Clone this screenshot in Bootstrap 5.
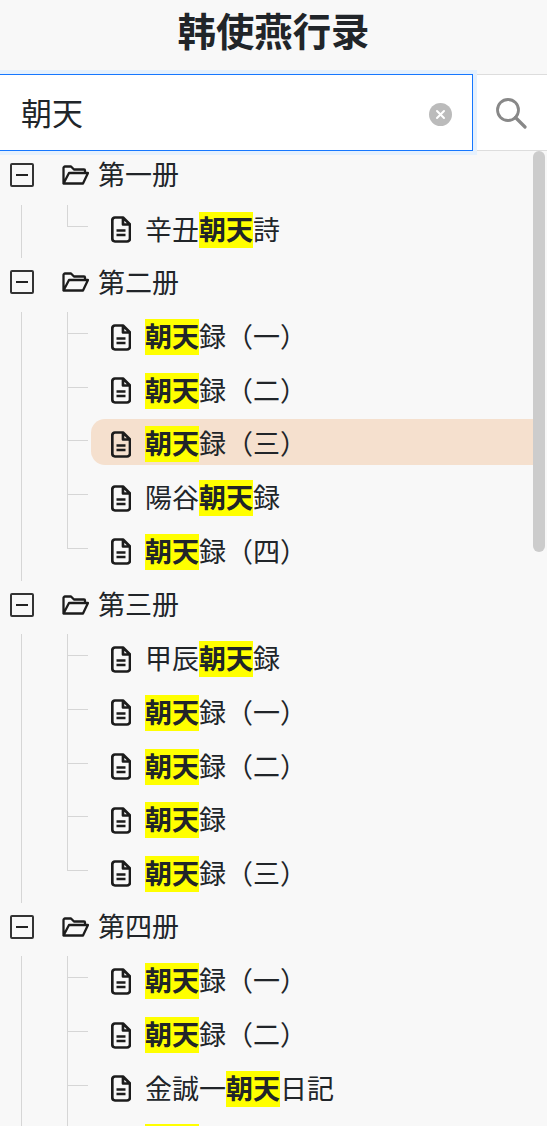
<!DOCTYPE html>
<html lang="ja">
<head>
    <title>韩使燕行录</title>
    <meta charset="utf-8">
    <link href="https://cdn.jsdelivr.net/npm/bootstrap@5.3.0/dist/css/bootstrap.min.css" rel="stylesheet">
    <style>
        html, body { height: 100%; overflow: hidden; }
        body { background: #f8f8f8; color: #212529; font-family: "Noto Sans", "Noto Sans CJK JP", sans-serif; }
        .app-title { height: 74px; margin: 0; font-size: 38.4px; font-weight: 700; line-height: 59px; text-align: center; font-family: "Noto Sans CJK SC", sans-serif; }
        .search-bar { height: 77px; background: #fff; border-top: 1px solid #ddd; border-bottom: 1px solid #ddd; }
        .search-box { width: 473px; height: 77px; margin-top: -1px; }
        .search-box input { height: 77px; padding: 0 50px 3px 22px; margin-left: -2px; width: 475px; border: 1px solid #1677ff; border-radius: 0; box-shadow: 0 0 0 4px #e6f1fd; font-size: 31px; color: #212529; outline: 0; font-family: "Noto Sans CJK JP", sans-serif; }
        .clear-btn { right: 21px; top: 27px; width: 23px; height: 23px; }
        .search-btn { width: 74px; height: 75px; padding: 0 0 0 1px; border: 0; border-radius: 0; }
        .tree-wrap { height: 975px; overflow: hidden; }
        .scroll-thumb { top: 0; right: 2px; width: 12px; height: 401px; border-radius: 6px; background: #ccc; }
        .tree-list { margin: 0; padding: 0 14px 0 0; list-style: none; }
        .tree-head { height: 53.7px; padding: 1px 0 6.7px; font-size: 27px; }
        .tree-head .toggle-ico { margin: 0 28px 0 10px; }
        .tree-head .folder-ico { margin-right: 9px; }
        .head-text { margin-top: 1px; }
        .tree-kids { margin: 0 0 0 21px; padding: 0 0 0 45px; list-style: none; border-left: 1px solid #d6d6d6; }
        .tree-leaf { height: 53.7px; border-left: 1px solid #d6d6d6; }
        .tree-leaf:last-child { border-left-color: transparent; }
        .leaf-elbow { width: 20px; height: 22px; flex: none; border-bottom: 1px solid #d6d6d6; }
        .tree-leaf:last-child .leaf-elbow { margin-left: -1px; width: 21px; border-left: 1px solid #d6d6d6; }
        .tree-node { height: 46px; flex: 1; margin-left: 3px; padding: 4px 0 0 20px; font-size: 27px; gap: 14px; border-radius: 14px 0 0 14px; white-space: nowrap; }
        .tree-node.is-current { background: #f5e0ce; }
        .hit { display: inline-block; height: 36px; line-height: 36px; background: #ff0; font-weight: 700; color: #212529; }
        .node-text { line-height: 36px; }
    </style>
</head>
<body>
    <h1 class="app-title">韩使燕行录</h1>

    <div class="search-bar d-flex">
        <div class="search-box position-relative">
            <input type="text" value="朝天">
            <span class="clear-btn position-absolute">
                <svg width="23" height="23" viewBox="0 0 23 23"><circle cx="11.5" cy="11.5" r="11.5" fill="#bbb"/><path d="M8 8l7 7M15 8l-7 7" stroke="#fff" stroke-width="2" stroke-linecap="round"/></svg>
            </span>
        </div>
        <button class="btn search-btn d-flex align-items-center justify-content-center" type="button">
            <svg width="32" height="32" viewBox="0 0 32 32" fill="none" stroke="#888"><circle cx="13" cy="13" r="10.5" stroke-width="2.8"/><path d="M20.5 20.5L30 30" stroke-width="3.2" stroke-linecap="round"/></svg>
        </button>
    </div>

    <svg class="d-none">
        <symbol id="ico-toggle" viewBox="0 0 24 24"><rect x="1" y="1" width="22" height="22" rx="1" fill="none" stroke="#333" stroke-width="2"/><path d="M6 12h12" stroke="#222" stroke-width="2"/></symbol>
        <symbol id="ico-folder" viewBox="0 0 27 20"><path d="M1.500 18.500V3A1.500 1.500 0 0 1 3 1.500H9l3 3H22A1 1 0 0 1 23 5.500V8M1.500 18.500H21L26 8H7z" fill="none" stroke="#1c1c1c" stroke-width="2.300" stroke-linejoin="round"/></symbol>
        <symbol id="ico-file" viewBox="0 0 20 27"><path d="M4 1.500H12L19 8.500V22.500A3 3 0 0 1 16 25.500H4A3 3 0 0 1 1.300 22.500V4.500A3 3 0 0 1 4 1.500ZM12 1.500V8.500H19M5.500 14.500H14.500M5.500 19H14.500" fill="none" stroke="#1c1c1c" stroke-width="2.700" stroke-linejoin="round"/></symbol>
    </svg>

    <div class="tree-wrap position-relative">
        <div class="scroll-thumb position-absolute"></div>
        <ul class="tree-list">
            <li>
                <div class="tree-head d-flex align-items-center"><svg class="toggle-ico" width="24" height="24"><use href="#ico-toggle"/></svg><svg class="folder-ico" width="27" height="20"><use href="#ico-folder"/></svg><span class="head-text">第一册</span></div>
                <ul class="tree-kids">
                    <li class="tree-leaf d-flex"><span class="leaf-elbow"></span><div class="tree-node d-flex align-items-center"><svg width="20" height="27"><use href="#ico-file"/></svg><span class="node-text">辛丑<span class="hit">朝天</span>詩</span></div></li>
                </ul>
            </li>
            <li>
                <div class="tree-head d-flex align-items-center"><svg class="toggle-ico" width="24" height="24"><use href="#ico-toggle"/></svg><svg class="folder-ico" width="27" height="20"><use href="#ico-folder"/></svg><span class="head-text">第二册</span></div>
                <ul class="tree-kids">
                    <li class="tree-leaf d-flex"><span class="leaf-elbow"></span><div class="tree-node d-flex align-items-center"><svg width="20" height="27"><use href="#ico-file"/></svg><span class="node-text"><span class="hit">朝天</span>録（一）</span></div></li>
                    <li class="tree-leaf d-flex"><span class="leaf-elbow"></span><div class="tree-node d-flex align-items-center"><svg width="20" height="27"><use href="#ico-file"/></svg><span class="node-text"><span class="hit">朝天</span>録（二）</span></div></li>
                    <li class="tree-leaf d-flex"><span class="leaf-elbow"></span><div class="tree-node is-current d-flex align-items-center"><svg width="20" height="27"><use href="#ico-file"/></svg><span class="node-text"><span class="hit">朝天</span>録（三）</span></div></li>
                    <li class="tree-leaf d-flex"><span class="leaf-elbow"></span><div class="tree-node d-flex align-items-center"><svg width="20" height="27"><use href="#ico-file"/></svg><span class="node-text">陽谷<span class="hit">朝天</span>録</span></div></li>
                    <li class="tree-leaf d-flex"><span class="leaf-elbow"></span><div class="tree-node d-flex align-items-center"><svg width="20" height="27"><use href="#ico-file"/></svg><span class="node-text"><span class="hit">朝天</span>録（四）</span></div></li>
                </ul>
            </li>
            <li>
                <div class="tree-head d-flex align-items-center"><svg class="toggle-ico" width="24" height="24"><use href="#ico-toggle"/></svg><svg class="folder-ico" width="27" height="20"><use href="#ico-folder"/></svg><span class="head-text">第三册</span></div>
                <ul class="tree-kids">
                    <li class="tree-leaf d-flex"><span class="leaf-elbow"></span><div class="tree-node d-flex align-items-center"><svg width="20" height="27"><use href="#ico-file"/></svg><span class="node-text">甲辰<span class="hit">朝天</span>録</span></div></li>
                    <li class="tree-leaf d-flex"><span class="leaf-elbow"></span><div class="tree-node d-flex align-items-center"><svg width="20" height="27"><use href="#ico-file"/></svg><span class="node-text"><span class="hit">朝天</span>録（一）</span></div></li>
                    <li class="tree-leaf d-flex"><span class="leaf-elbow"></span><div class="tree-node d-flex align-items-center"><svg width="20" height="27"><use href="#ico-file"/></svg><span class="node-text"><span class="hit">朝天</span>録（二）</span></div></li>
                    <li class="tree-leaf d-flex"><span class="leaf-elbow"></span><div class="tree-node d-flex align-items-center"><svg width="20" height="27"><use href="#ico-file"/></svg><span class="node-text"><span class="hit">朝天</span>録</span></div></li>
                    <li class="tree-leaf d-flex"><span class="leaf-elbow"></span><div class="tree-node d-flex align-items-center"><svg width="20" height="27"><use href="#ico-file"/></svg><span class="node-text"><span class="hit">朝天</span>録（三）</span></div></li>
                </ul>
            </li>
            <li>
                <div class="tree-head d-flex align-items-center"><svg class="toggle-ico" width="24" height="24"><use href="#ico-toggle"/></svg><svg class="folder-ico" width="27" height="20"><use href="#ico-folder"/></svg><span class="head-text">第四册</span></div>
                <ul class="tree-kids">
                    <li class="tree-leaf d-flex"><span class="leaf-elbow"></span><div class="tree-node d-flex align-items-center"><svg width="20" height="27"><use href="#ico-file"/></svg><span class="node-text"><span class="hit">朝天</span>録（一）</span></div></li>
                    <li class="tree-leaf d-flex"><span class="leaf-elbow"></span><div class="tree-node d-flex align-items-center"><svg width="20" height="27"><use href="#ico-file"/></svg><span class="node-text"><span class="hit">朝天</span>録（二）</span></div></li>
                    <li class="tree-leaf d-flex"><span class="leaf-elbow"></span><div class="tree-node d-flex align-items-center"><svg width="20" height="27"><use href="#ico-file"/></svg><span class="node-text">金誠一<span class="hit">朝天</span>日記</span></div></li>
                    <li class="tree-leaf d-flex"><span class="leaf-elbow"></span><div class="tree-node d-flex align-items-center"><svg width="20" height="27"><use href="#ico-file"/></svg><span class="node-text"><span class="hit">朝天</span>録</span></div></li>
                </ul>
            </li>
        </ul>
    </div>
</body>
</html>
